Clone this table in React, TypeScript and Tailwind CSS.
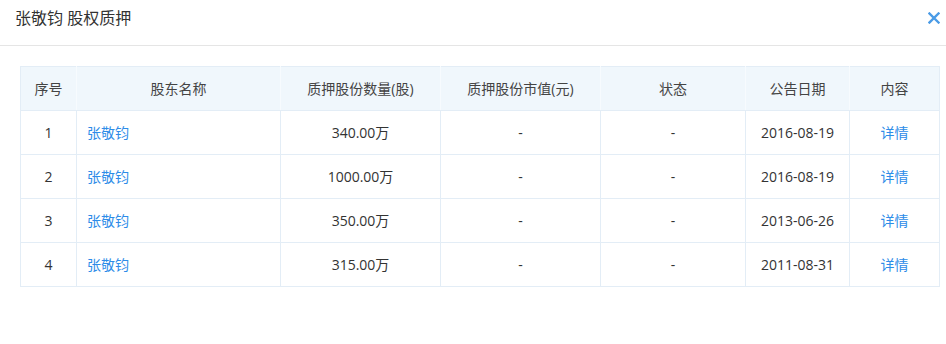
const rows = [
  { no: 1, name: '张敬钧', amount: '340.00万', value: '-', status: '-', date: '2016-08-19' },
  { no: 2, name: '张敬钧', amount: '1000.00万', value: '-', status: '-', date: '2016-08-19' },
  { no: 3, name: '张敬钧', amount: '350.00万', value: '-', status: '-', date: '2013-06-26' },
  { no: 4, name: '张敬钧', amount: '315.00万', value: '-', status: '-', date: '2011-08-31' },
]

const headers = ['序号', '股东名称', '质押股份数量(股)', '质押股份市值(元)', '状态', '公告日期', '内容']
const widths = ['w-[56px]', 'w-[204px]', 'w-[160px]', 'w-[160px]', 'w-[145px]', 'w-[104px]', 'w-[90px]']

export default function App() {
  return (
    <div
      className="w-[946px] h-[344px] bg-white text-[#333]"
      style={{ fontFamily: '"Open Sans", "Noto Sans CJK SC", sans-serif' }}
    >
      {/* 标题栏 */}
      <div className="h-[46px] flex items-center justify-between pl-[15px] pr-[4px] border-b border-[#e5e5e5]">
        <span className="text-[16px] text-[#333] -mt-[9px]">张敬钧 股权质押</span>
        <svg width="12" height="12" viewBox="0 0 12 12" className="-mt-[9px] mr-[2px]">
          <path d="M1.5 1.5 L10.5 10.5 M10.5 1.5 L1.5 10.5" stroke="#4a9be6" strokeWidth="2.4" strokeLinecap="square" />
        </svg>
      </div>

      {/* 表格 */}
      <div className="pt-[20px] pl-[20px] pr-[6px]">
        <table className="table-fixed border-collapse w-[920px] text-[14px]">
          <thead>
            <tr className="h-[44px] bg-[#f0f7fc]">
              {headers.map((h, i) => (
                <th
                  key={h}
                  className={`${widths[i]} font-normal text-[#444] border border-[#e3edf6] border-l-[#f7fbfe] border-r-[#f7fbfe] first:border-l-[#e3edf6] last:border-r-[#e3edf6]`}
                >
                  {h}
                </th>
              ))}
            </tr>
          </thead>
          <tbody>
            {rows.map((r) => (
              <tr key={r.no} className="h-[44px]">
                <td className="border border-[#e3edf6] text-center">{r.no}</td>
                <td className="border border-[#e3edf6] pl-[10px] text-[#2d8ce8]">{r.name}</td>
                <td className="border border-[#e3edf6] text-center">{r.amount}</td>
                <td className="border border-[#e3edf6] text-center">{r.value}</td>
                <td className="border border-[#e3edf6] text-center">{r.status}</td>
                <td className="border border-[#e3edf6] text-center">{r.date}</td>
                <td className="border border-[#e3edf6] text-center text-[#2d8ce8]">详情</td>
              </tr>
            ))}
          </tbody>
        </table>
      </div>
    </div>
  )
}
